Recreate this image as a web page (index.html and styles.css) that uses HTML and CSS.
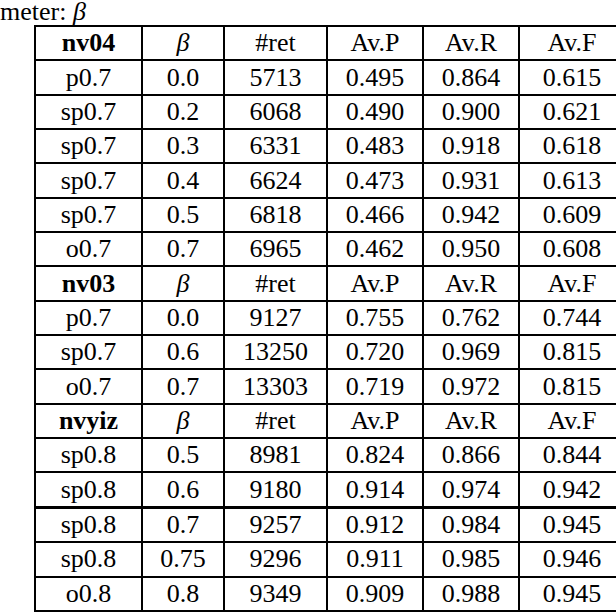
FILE: index.html
```html
<!DOCTYPE html>
<html lang="en">
<head>
    <meta charset="UTF-8">
    <title>Parameter beta</title>
    <link rel="stylesheet" href="styles.css">
</head>
<body>
    <div class="caption">meter: <span class="sym">β</span></div>

    <table class="results">
        <colgroup>
            <col class="c-run">
            <col class="c-beta">
            <col class="c-ret">
            <col class="c-val">
            <col class="c-val">
            <col class="c-last">
        </colgroup>
        <tr class="head">
            <td class="name">nv04</td><td class="sym">β</td><td>#ret</td><td>Av.P</td><td>Av.R</td><td>Av.F</td>
        </tr>
        <tr><td>p0.7</td><td>0.0</td><td>5713</td><td>0.495</td><td>0.864</td><td>0.615</td></tr>
        <tr><td>sp0.7</td><td>0.2</td><td>6068</td><td>0.490</td><td>0.900</td><td>0.621</td></tr>
        <tr><td>sp0.7</td><td>0.3</td><td>6331</td><td>0.483</td><td>0.918</td><td>0.618</td></tr>
        <tr><td>sp0.7</td><td>0.4</td><td>6624</td><td>0.473</td><td>0.931</td><td>0.613</td></tr>
        <tr><td>sp0.7</td><td>0.5</td><td>6818</td><td>0.466</td><td>0.942</td><td>0.609</td></tr>
        <tr><td>o0.7</td><td>0.7</td><td>6965</td><td>0.462</td><td>0.950</td><td>0.608</td></tr>
        <tr class="head">
            <td class="name">nv03</td><td class="sym">β</td><td>#ret</td><td>Av.P</td><td>Av.R</td><td>Av.F</td>
        </tr>
        <tr><td>p0.7</td><td>0.0</td><td>9127</td><td>0.755</td><td>0.762</td><td>0.744</td></tr>
        <tr><td>sp0.7</td><td>0.6</td><td>13250</td><td>0.720</td><td>0.969</td><td>0.815</td></tr>
        <tr><td>o0.7</td><td>0.7</td><td>13303</td><td>0.719</td><td>0.972</td><td>0.815</td></tr>
        <tr class="head">
            <td class="name">nvyiz</td><td class="sym">β</td><td>#ret</td><td>Av.P</td><td>Av.R</td><td>Av.F</td>
        </tr>
        <tr><td>sp0.8</td><td>0.5</td><td>8981</td><td>0.824</td><td>0.866</td><td>0.844</td></tr>
        <tr><td>sp0.8</td><td>0.6</td><td>9180</td><td>0.914</td><td>0.974</td><td>0.942</td></tr>
        <tr class="split"><td>sp0.8</td><td>0.7</td><td>9257</td><td>0.912</td><td>0.984</td><td>0.945</td></tr>
        <tr><td>sp0.8</td><td>0.75</td><td>9296</td><td>0.911</td><td>0.985</td><td>0.946</td></tr>
        <tr><td>o0.8</td><td>0.8</td><td>9349</td><td>0.909</td><td>0.988</td><td>0.945</td></tr>
    </table>
</body>
</html>
```

FILE: styles.css
```css
body {
    margin: 0;
    background: white;
    color: black;
    font-family: "Liberation Serif", "Times New Roman", serif;
    font-size: 26px;
    overflow: hidden;
    width: 616px;
    height: 612px;
}
.caption {
    height: 25px;
    line-height: 24px;
    white-space: nowrap;
}
.sym {
    font-style: italic;
}
.results {
    margin-left: 34px;
    border-collapse: collapse;
    table-layout: fixed;
    width: 590px;
}
.c-run { width: 107px; }
.c-beta { width: 82px; }
.c-ret { width: 103px; }
.c-val { width: 96px; }
.c-last { width: 106px; }
.results td {
    border: 2px solid black;
    height: 32.35px;
    padding: 0;
    text-align: center;
    vertical-align: middle;
    line-height: 26px;
    white-space: nowrap;
}
.results .name {
    font-weight: bold;
}
.results tr.split td {
    border-top-width: 3px;
}
```
